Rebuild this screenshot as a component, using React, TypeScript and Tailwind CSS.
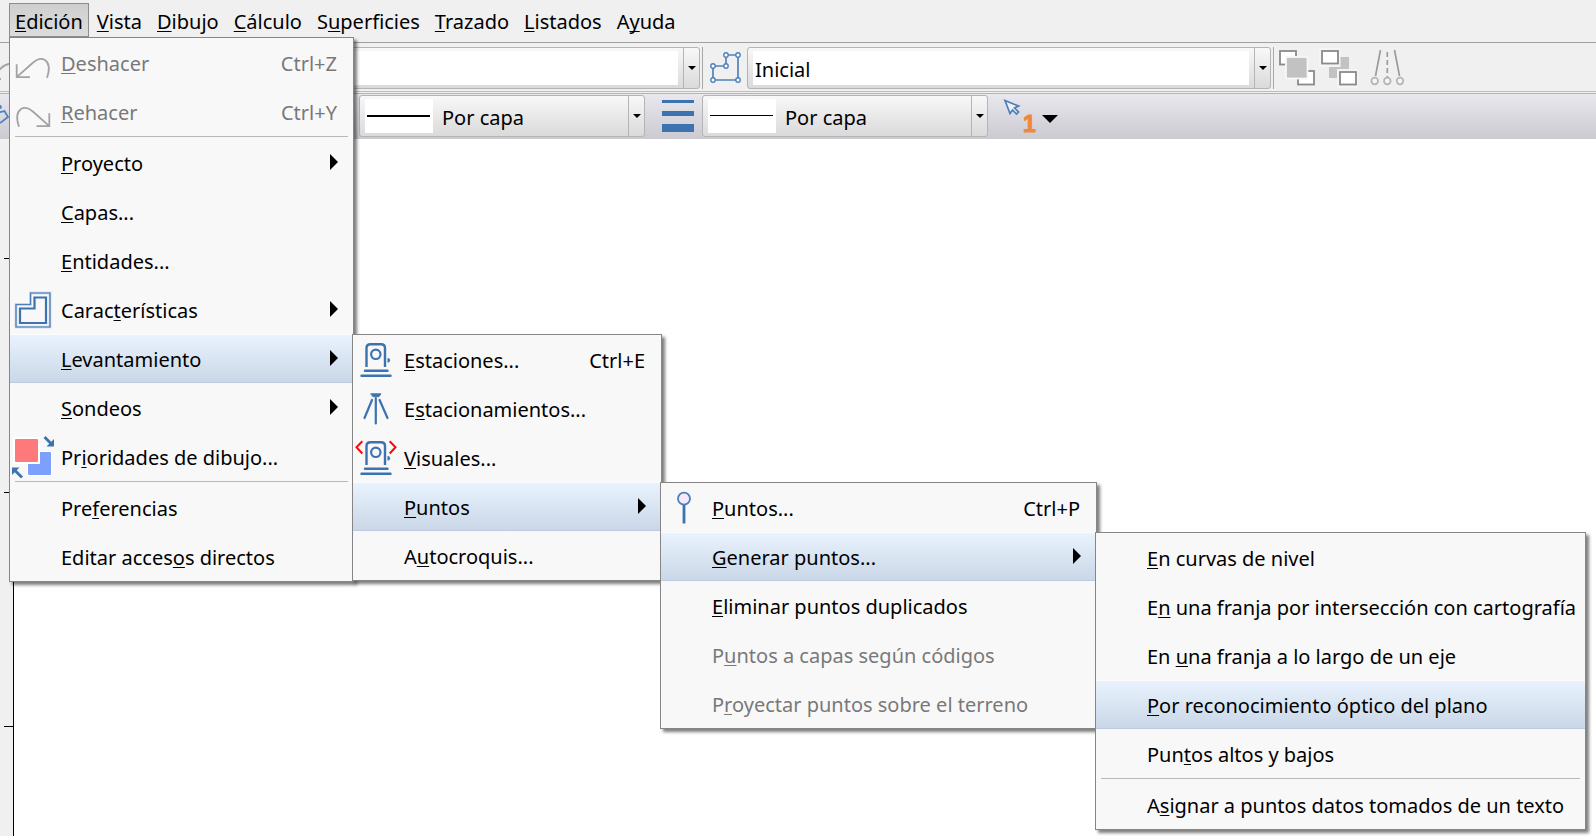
import type { ReactNode } from "react";
import clsx from "clsx";

type MenuEntry = {
  // "&" marks the letter used as keyboard mnemonic
  label: string;
  shortcut?: string;
  icon?: ReactNode;
  disabled?: boolean;
  separatorBefore?: boolean;
  hasSubmenu?: boolean;
  active?: boolean;
  submenu?: { items: MenuEntry[]; width: string };
};

const BLUE = "#3b72af";

function Mnemonic({ text }: { text: string }) {
  const i = text.indexOf("&");
  if (i < 0) return <>{text}</>;
  return (
    <>
      {text.slice(0, i)}
      <span className="underline decoration-1 underline-offset-2 [text-decoration-skip-ink:none]">
        {text[i + 1]}
      </span>
      {text.slice(i + 2)}
    </>
  );
}

function UndoIcon() {
  return (
    <svg viewBox="0 0 42 42" className="size-full" fill="none" stroke="#a3a3a3" strokeWidth="1.8">
      <path d="M4.7 22.3V35.2H18M4.7 35.2L20 21.5C25 17 29 15.5 33 18C38 21.5 38 27 35 35.7" />
    </svg>
  );
}

function RedoIcon() {
  return (
    <svg viewBox="0 0 42 42" className="size-full" fill="none" stroke="#a3a3a3" strokeWidth="1.8">
      <path d="M37.3 22.3V35.2H24.5M37.3 35.2L22 21.5C17 17 13 15.5 9 18C4 21.5 4 27 7 35.7" />
    </svg>
  );
}

function FeaturesIcon() {
  return (
    <svg viewBox="0 0 42 42" className="size-full" fill="none">
      <path d="M18.5 4H38V38H4V15.5H18.5Z" stroke="#b9cce2" strokeWidth="2.5" />
      <path d="M18.5 4H38V38H4V15.5H18.5Z" stroke="#4a7fb8" strokeWidth="1.2" />
      <path d="M22.5 8.5H34V34H8V19.5H22.5Z" stroke={BLUE} strokeWidth="2.2" />
    </svg>
  );
}

function PrioritiesIcon() {
  return (
    <svg viewBox="0 0 42 42" className="size-full">
      <rect x="15" y="15" width="25" height="25" fill="#fff" />
      <rect x="16" y="16" width="23" height="23" rx="1" fill="#7da0fd" />
      <rect x="1" y="1" width="27" height="27" fill="#fff" />
      <rect x="3" y="3" width="23" height="23" rx="1" fill="#fe7a7a" />
      <path d="M32.5 1L39 7.5" stroke={BLUE} strokeWidth="2.8" />
      <path d="M42 3V10.5H34.5Z" fill={BLUE} />
      <path d="M10 41.5L3.5 35" stroke={BLUE} strokeWidth="2.8" />
      <path d="M0 39V31.5H7.5Z" fill={BLUE} />
    </svg>
  );
}

function StationIcon({ sights = false }: { sights?: boolean }) {
  return (
    <svg viewBox="0 0 42 42" className="size-full" fill="none" stroke={BLUE} strokeWidth="2.4">
      <path d="M11.5 28V9Q11.5 5.2 15.5 5.2H26Q30 5.2 30 9V28" />
      <circle cx="20.8" cy="15.3" r="4.7" strokeWidth="2.2" />
      <path d="M32.8 19.3A2 2 0 0 1 32.8 23.3Z" fill={BLUE} strokeWidth="0.6" />
      <path d="M10 31.7H32.5M6.5 36.7H35.5" strokeLinecap="round" />
      {sights && (
        <path d="M7.3 4.3L1.5 10.3L7.3 16.5M34.7 4.3L40.5 10.3L34.7 16.5" stroke="#fb0a0a" strokeWidth="2" />
      )}
    </svg>
  );
}

function TripodIcon() {
  return (
    <svg viewBox="0 0 42 42" className="size-full" fill="none" stroke={BLUE} strokeWidth="2.2" strokeLinecap="round">
      <path d="M16 5.7H26L24 8.7H18Z" fill={BLUE} strokeWidth="0.8" />
      <path d="M20.8 10V35.5M17 12L9.5 30M24.6 12L32.5 30" />
    </svg>
  );
}

function PinIcon() {
  return (
    <svg viewBox="0 0 42 42" className="size-full">
      <path d="M21 17V36.5" stroke={BLUE} strokeWidth="2.8" />
      <circle cx="21" cy="11.7" r="6" fill="#f6e8ff" stroke="#4a7fb8" strokeWidth="1.8" />
    </svg>
  );
}

const optionsGenerar: MenuEntry[] = [
  { label: "&En curvas de nivel" },
  { label: "E&n una franja por intersección con cartografía" },
  { label: "En &una franja a lo largo de un eje" },
  { label: "&Por reconocimiento óptico del plano", active: true },
  { label: "Pun&tos altos y bajos" },
  { label: "A&signar a puntos datos tomados de un texto", separatorBefore: true },
];

const optionsPuntos: MenuEntry[] = [
  { label: "&Puntos...", shortcut: "Ctrl+P", icon: <PinIcon /> },
  {
    label: "&Generar puntos...",
    active: true,
    hasSubmenu: true,
    submenu: { items: optionsGenerar, width: "w-[491px]" },
  },
  { label: "&Eliminar puntos duplicados" },
  { label: "P&untos a capas según códigos", disabled: true },
  { label: "P&royectar puntos sobre el terreno", disabled: true },
];

const optionsLevantamiento: MenuEntry[] = [
  { label: "&Estaciones...", shortcut: "Ctrl+E", icon: <StationIcon /> },
  { label: "E&stacionamientos...", icon: <TripodIcon /> },
  { label: "&Visuales...", icon: <StationIcon sights /> },
  {
    label: "&Puntos",
    active: true,
    hasSubmenu: true,
    submenu: { items: optionsPuntos, width: "w-[437px]" },
  },
  { label: "A&utocroquis..." },
];

const optionsEdicion: MenuEntry[] = [
  { label: "&Deshacer", shortcut: "Ctrl+Z", disabled: true, icon: <UndoIcon /> },
  { label: "&Rehacer", shortcut: "Ctrl+Y", disabled: true, icon: <RedoIcon /> },
  { label: "&Proyecto", hasSubmenu: true, separatorBefore: true },
  { label: "&Capas..." },
  { label: "&Entidades..." },
  { label: "Carac&terísticas", hasSubmenu: true, icon: <FeaturesIcon /> },
  {
    label: "&Levantamiento",
    active: true,
    hasSubmenu: true,
    submenu: { items: optionsLevantamiento, width: "w-[310px]" },
  },
  { label: "&Sondeos", hasSubmenu: true },
  { label: "Pr&ioridades de dibujo...", icon: <PrioritiesIcon /> },
  { label: "Pre&ferencias", separatorBefore: true },
  { label: "Editar acces&os directos" },
];

function Menu({ items, width }: { items: MenuEntry[]; width: string }) {
  return (
    <ul
      role="menu"
      className={clsx(
        "border border-[#868686] bg-[#f8f8f8] shadow-[3px_3px_3px_rgba(0,0,0,0.5)]",
        width
      )}
    >
      {items.map((item) => (
        <li key={item.label} role="none">
          {item.separatorBefore && (
            <div role="separator" className="mx-[5px] mb-px h-px bg-[#b8b8b8]" />
          )}
          <div className="relative">
            <button
              type="button"
              role="menuitem"
              disabled={item.disabled}
              aria-haspopup={item.hasSubmenu ? "menu" : undefined}
              className={clsx(
                "flex h-[49px] w-full items-center gap-[7px] border-y pr-4 pl-[2px] text-left whitespace-nowrap",
                item.active
                  ? "border-t-[#fbfcfe] border-b-[#bccbdf] bg-linear-to-b from-[#e9f3fe] to-[#cad7e7]"
                  : "border-transparent",
                item.disabled ? "text-[#787878]" : "text-black"
              )}
            >
              <span className="size-[42px] shrink-0">{item.icon}</span>
              <span className="flex-1 pt-[2px]">
                <Mnemonic text={item.label} />
              </span>
              {item.shortcut && <span className="pt-[2px]">{item.shortcut}</span>}
              {item.hasSubmenu && (
                <svg viewBox="0 0 8 16" className="-mr-px mb-[2px] h-4 w-2 shrink-0">
                  <path d="M0 0L8 8L0 16Z" />
                </svg>
              )}
            </button>
            {item.submenu && (
              <div className="absolute top-0 left-full z-10 -ml-px">
                <Menu items={item.submenu.items} width={item.submenu.width} />
              </div>
            )}
          </div>
        </li>
      ))}
    </ul>
  );
}

const menuBar = [
  "&Vista",
  "&Dibujo",
  "&Cálculo",
  "S&uperficies",
  "&Trazado",
  "&Listados",
  "A&yuda",
];

function ComboBox({
  label,
  value,
  width,
  swatch,
}: {
  label: string;
  value: string;
  width: string;
  swatch?: ReactNode;
}) {
  return (
    <div
      className={clsx(
        "flex h-[42px] shrink-0 items-center rounded-[3px] border border-[#b4b4b4] bg-linear-to-b from-[#f8f8f8] to-[#dadada] pl-[5px]",
        width
      )}
    >
      {swatch}
      <select
        aria-label={label}
        defaultValue={value}
        className={clsx(
          "mr-[5px] h-[34px] min-w-0 flex-1 appearance-none pt-1 outline-none",
          swatch ? "bg-transparent pl-[9px]" : "bg-white pl-[2px]"
        )}
      >
        <option value={value}>{value}</option>
      </select>
      <span className="flex h-full w-4 items-center justify-center border-l border-[#b4b4b4]">
        <svg viewBox="0 0 8 4" className="h-1 w-2">
          <path d="M0 0H8L4 4Z" />
        </svg>
      </span>
    </div>
  );
}

function LineSwatch({ weight }: { weight: number }) {
  return (
    <svg viewBox="0 0 68 34" className="h-[34px] w-[68px] shrink-0 bg-white">
      <rect x="2" y="16" width="63" height={weight} />
    </svg>
  );
}

function Separator() {
  return <span className="ml-[2px] h-[42px] w-px shrink-0 bg-[#a8a8a8]" />;
}

function Toolbars() {
  return (
    <>
      <div className="flex h-[50px] border-t border-b border-t-[#a0a0a0] border-b-[#bdbdbd] pt-1">
        <svg viewBox="0 0 20 42" className="h-[42px] w-5 shrink-0" fill="none" stroke="#a3a3a3" strokeWidth="1.8">
          <path d="M-6 30L0 22Q5 17 12 16.5M0 33V31" />
        </svg>
        <div className="ml-10 flex">
          <ComboBox label="Capa" value="" width="w-[640px]" />
          <Separator />
          <button type="button" aria-label="Superficie" className="ml-1 h-[42px] w-9">
            <svg viewBox="0 0 36 42" className="size-full" fill="none" stroke="#4f82ba" strokeWidth="1.7">
              <path d="M6 19H19V8H31V33H6Z" />
              <g fill="#fff" strokeWidth="1.4">
                <circle cx="6" cy="19" r="2.2" />
                <circle cx="19" cy="19" r="2.2" />
                <circle cx="19" cy="8" r="2.2" />
                <circle cx="31" cy="8" r="2.2" />
                <circle cx="31" cy="33" r="2.2" />
                <circle cx="6" cy="33" r="2.2" />
              </g>
            </svg>
          </button>
          <div className="ml-1 flex">
            <ComboBox label="Superficie activa" value="Inicial" width="w-[524px]" />
          </div>
          <Separator />
          <button type="button" aria-label="Traer al frente" className="ml-[2px] size-[42px]">
            <svg viewBox="0 0 42 42" className="size-full" fill="#fff" stroke="#8a8a8a" strokeWidth="1.8">
              <rect x="4" y="4" width="16" height="13.5" />
              <rect x="22" y="24" width="16" height="13.5" />
              <rect x="10" y="10" width="21.5" height="21.5" fill="#c2c2c2" stroke="#f8f8f8" />
            </svg>
          </button>
          <button type="button" aria-label="Enviar al fondo" className="size-[42px]">
            <svg viewBox="0 0 42 42" className="size-full" fill="#fff" stroke="#8a8a8a" strokeWidth="1.8">
              <rect x="11" y="10" width="20" height="21" fill="#c2c2c2" stroke="none" />
              <rect x="1" y="1" width="21.5" height="19" fill="#f4f4f4" stroke="none" />
              <rect x="19" y="22" width="21" height="19" fill="#f4f4f4" stroke="none" />
              <rect x="4" y="4" width="16" height="12.5" />
              <rect x="22" y="25" width="16" height="12.5" />
            </svg>
          </button>
          <button type="button" aria-label="Perfil transversal" className="ml-[6px] size-[42px]">
            <svg viewBox="0 0 42 42" className="size-full" fill="none" stroke="#9c9c9c" strokeWidth="1.7">
              <path d="M14.5 3L9.5 29M28.5 3L33.5 29" />
              <path d="M21.3 5V30" strokeDasharray="5 3" />
              <g stroke="#b4b4b4" fill="#f4f4f4">
                <circle cx="8.7" cy="34" r="3.3" />
                <circle cx="21.3" cy="34" r="3.3" />
                <circle cx="34" cy="34" r="3.3" />
              </g>
            </svg>
          </button>
        </div>
      </div>

      <div className="mt-px flex h-[46px] border-t border-[#b4b4b4] bg-linear-to-b from-[#e9e8ee] to-[#cbcad0] pt-px">
        <svg viewBox="0 0 20 42" className="h-[42px] w-5 shrink-0" fill="none" stroke="#4f82ba" strokeWidth="1.8">
          <path d="M-4 18L4.5 16L8 22L0 28" />
          <circle cx="0" cy="12" r="1" />
        </svg>
        <div className="ml-[339px] flex">
          <ComboBox
            label="Tipo de línea"
            value="Por capa"
            width="w-[286px]"
            swatch={<LineSwatch weight={2} />}
          />
          <button type="button" aria-label="Grosor" className="ml-[11px] size-[42px]">
            <svg viewBox="0 0 42 42" className="size-full" fill={BLUE}>
              <rect x="6" y="5" width="32" height="3" />
              <rect x="6" y="16" width="32" height="5" />
              <rect x="6" y="29" width="32" height="8" />
            </svg>
          </button>
          <div className="ml-1 flex">
            <ComboBox
              label="Grosor de línea"
              value="Por capa"
              width="w-[286px]"
              swatch={<LineSwatch weight={1} />}
            />
          </div>
          <button type="button" aria-label="Modo de selección" className="ml-3 flex items-center gap-[6px]">
            <svg viewBox="0 0 36 42" className="h-[42px] w-9">
              <path
                d="M5 4.5L18.5 10L14.5 12L18.5 16L16.5 18L12.5 14L10 17.5Z"
                fill="#eef0f6"
                stroke="#4a7fb8"
                strokeWidth="1.7"
              />
              <text
                x="23"
                y="36"
                fontSize="23"
                strokeWidth="1"
                className="fill-[#f08838] stroke-[#f08838] font-['Liberation_Sans',sans-serif] font-bold"
              >
                1
              </text>
            </svg>
            <svg viewBox="0 0 16 8" className="mt-1 h-2 w-4">
              <path d="M0 0H16L8 8Z" />
            </svg>
          </button>
        </div>
      </div>
    </>
  );
}

function Ruler() {
  return (
    <div className="flex w-[14px] flex-col items-end border-r border-black bg-[#f0f0f0]">
      <span className="mt-[119px] h-px w-[9px] bg-black" />
      <span className="mt-[233px] h-px w-[9px] bg-black" />
      <span className="mt-[233px] h-px w-[9px] bg-black" />
    </div>
  );
}

export default function App() {
  return (
    <div className="flex min-h-screen flex-col overflow-hidden bg-[#f0f0f0] font-['Noto_Sans','Open_Sans',sans-serif] text-[20px] leading-[28px] text-black">
      <nav className="flex h-[42px] items-start gap-px pt-[3px] pl-[9px]">
        <div className="relative">
          <button
            type="button"
            aria-haspopup="menu"
            className="h-[34px] border border-[#8c8c8c] bg-linear-to-b from-[#cfcfcf] to-[#dcdcdc] px-[5px] pt-1"
          >
            <Mnemonic text="&Edición" />
          </button>
          <div className="absolute top-full left-0 z-10">
            <Menu items={optionsEdicion} width="w-[345px]" />
          </div>
        </div>
        {menuBar.map((label) => (
          <button key={label} type="button" className="h-[34px] px-[7px] pt-1">
            <Mnemonic text={label} />
          </button>
        ))}
      </nav>

      <Toolbars />

      <main className="flex flex-1 bg-white">
        <Ruler />
      </main>
    </div>
  );
}
